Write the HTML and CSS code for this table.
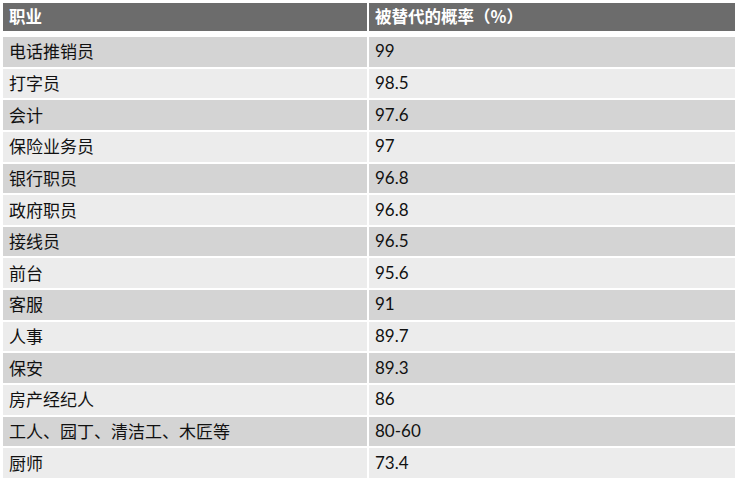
FILE: index.html
```html
<!DOCTYPE html>
<html lang="zh">
<head>
<meta charset="utf-8">
<link rel="stylesheet" href="styles.css">
</head>
<body>
<div class="table">
  <div class="row head"><div class="c1">职业</div><div class="c2">被替代的概率（%）</div></div>
  <div class="row odd"><div class="c1">电话推销员</div><div class="c2 num">99</div></div>
  <div class="row even"><div class="c1">打字员</div><div class="c2 num">98.5</div></div>
  <div class="row odd"><div class="c1">会计</div><div class="c2 num">97.6</div></div>
  <div class="row even"><div class="c1">保险业务员</div><div class="c2 num">97</div></div>
  <div class="row odd"><div class="c1">银行职员</div><div class="c2 num">96.8</div></div>
  <div class="row even"><div class="c1">政府职员</div><div class="c2 num">96.8</div></div>
  <div class="row odd"><div class="c1">接线员</div><div class="c2 num">96.5</div></div>
  <div class="row even"><div class="c1">前台</div><div class="c2 num">95.6</div></div>
  <div class="row odd"><div class="c1">客服</div><div class="c2 num">91</div></div>
  <div class="row even"><div class="c1">人事</div><div class="c2 num">89.7</div></div>
  <div class="row odd"><div class="c1">保安</div><div class="c2 num">89.3</div></div>
  <div class="row even"><div class="c1">房产经纪人</div><div class="c2 num">86</div></div>
  <div class="row odd"><div class="c1">工人、园丁、清洁工、木匠等</div><div class="c2 num">80-60</div></div>
  <div class="row even"><div class="c1">厨师</div><div class="c2 num">73.4</div></div>
</div>
</body>
</html>
```
FILE: styles.css
```css
html, body {
  margin: 0;
  padding: 0;
  background: #ffffff;
}
body {
  padding: 3px 5px 0 3px;
  font-family: "Noto Sans CJK SC", "Noto Sans", sans-serif;
}
.table {
  display: flex;
  flex-direction: column;
  gap: 2px;
  width: 732px;
}
.row {
  display: grid;
  grid-template-columns: 364px 366px;
  column-gap: 2px;
  height: 29.65px;
}
.row > div {
  display: flex;
  align-items: center;
  padding-left: 6px;
  font-size: 17px;
  color: #111111;
  line-height: 1;
  padding-bottom: 2px;
}
.head {
  height: 28px;
  margin-bottom: 4px;
}
.head > div {
  background: #6c6c6c;
  color: #ffffff;
  font-weight: bold;
  font-size: 16.5px;
}
.odd > div {
  background: #d4d4d4;
}
.even > div {
  background: #ececec;
}
.row > .num {
  font-family: "Lato", "Noto Sans", sans-serif;
  font-size: 17px;
}
```
